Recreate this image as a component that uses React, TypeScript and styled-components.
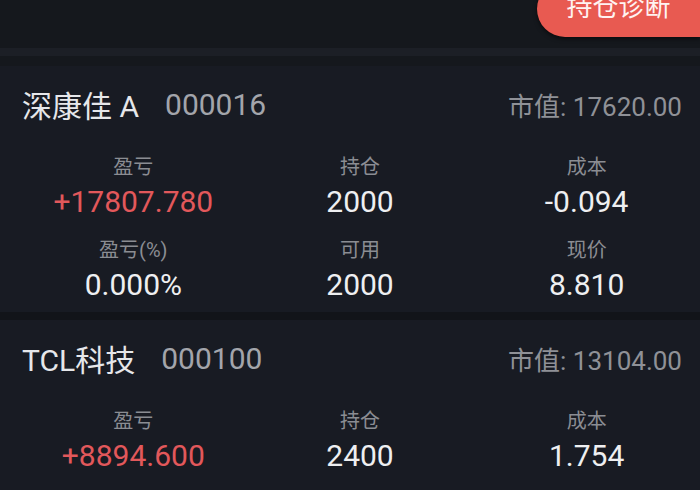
import React from "react";
import styled, { createGlobalStyle } from "styled-components";

interface Cell {
	label: string;
	value: string;
	up?: boolean;
}

interface Holding {
	name: string;
	code: string;
	marketValue: string;
	cells: Cell[];
}

const holdings: Holding[] = [
	{
		name: "深康佳 A",
		code: "000016",
		marketValue: "17620.00",
		cells: [
			{ label: "盈亏", value: "+17807.780", up: true },
			{ label: "持仓", value: "2000" },
			{ label: "成本", value: "-0.094" },
			{ label: "盈亏(%)", value: "0.000%" },
			{ label: "可用", value: "2000" },
			{ label: "现价", value: "8.810" },
		],
	},
	{
		name: "TCL科技",
		code: "000100",
		marketValue: "13104.00",
		cells: [
			{ label: "盈亏", value: "+8894.600", up: true },
			{ label: "持仓", value: "2400" },
			{ label: "成本", value: "1.754" },
			{ label: "盈亏(%)", value: "0.000%" },
			{ label: "可用", value: "2400" },
			{ label: "现价", value: "5.460" },
		],
	},
];

const GlobalStyle = createGlobalStyle`
	html, body {
		margin: 0;
		padding: 0;
		background: #15181d;
		overflow: hidden;
	}
	body {
		font-family: Roboto, "Noto Sans CJK SC", sans-serif;
	}
`;

const Page = styled.div`
	width: 700px;
	height: 490px;
	overflow: hidden;
	background: #15181d;
`;

const TopBar = styled.div`
	height: 48px;
	display: flex;
	justify-content: flex-end;
	align-items: flex-start;
	background: #15181d;
`;

const DiagnoseButton = styled.div`
	width: 163px;
	height: 56px;
	margin-top: -19px;
	padding-bottom: 10px;
	box-sizing: border-box;
	display: flex;
	align-items: center;
	justify-content: center;
	background: #e85a51;
	border-radius: 28px 0 0 28px;
	box-shadow: 0 2px 4px rgba(0, 0, 0, 0.55);
	color: #fff3f1;
	font-size: 26px;
`;

const Band = styled.div`
	height: 8px;
	background: #1c1f26;
`;

const List = styled.div`
	padding-top: 10px;
	display: flex;
	flex-direction: column;
`;

const Card = styled.div`
	background: #181b23;
	padding: 18px 0 6px;
	border-bottom: 8px solid #121419;
`;

const Header = styled.div`
	height: 40px;
	display: flex;
	align-items: center;
	padding: 0 18px 0 22px;
`;

const Name = styled.span`
	font-size: 30px;
	color: #e6e7ea;
`;

const Code = styled.span`
	margin-left: 26px;
	font-size: 30px;
	color: #a3a5ab;
`;

const MarketValue = styled.span`
	margin-left: auto;
	font-size: 26px;
	color: #8f9197;
`;

const Grid = styled.div`
	display: grid;
	grid-template-columns: repeat(3, 1fr);
	row-gap: 13px;
	margin-top: 29px;
	padding-left: 20px;
`;

const CellBox = styled.div`
	height: 70px;
	display: flex;
	flex-direction: column;
	align-items: center;
`;

const Label = styled.div`
	height: 28px;
	line-height: 28px;
	font-size: 20px;
	color: #8b8d93;
`;

const Value = styled.div<{ $up?: boolean }>`
	height: 42px;
	line-height: 42px;
	font-size: 30px;
	color: ${(p) => (p.$up ? "#e2585b" : "#eeeff1")};
`;

export default function App() {
	return (
		<Page>
			<GlobalStyle />
			<TopBar>
				<DiagnoseButton>持仓诊断</DiagnoseButton>
			</TopBar>
			<Band />
			<List>
				{holdings.map((h) => (
					<Card key={h.code}>
						<Header>
							<Name>{h.name}</Name>
							<Code>{h.code}</Code>
							<MarketValue>市值: {h.marketValue}</MarketValue>
						</Header>
						<Grid>
							{h.cells.map((c) => (
								<CellBox key={c.label}>
									<Label>{c.label}</Label>
									<Value $up={c.up}>{c.value}</Value>
								</CellBox>
							))}
						</Grid>
					</Card>
				))}
			</List>
		</Page>
	);
}
